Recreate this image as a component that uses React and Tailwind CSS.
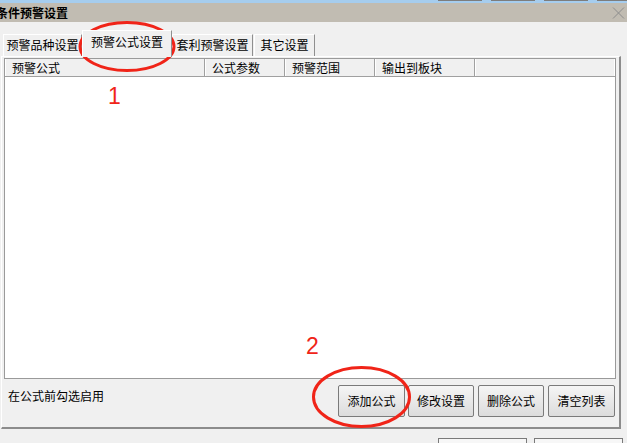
import React from 'react';

const tabs = [
  { label: '预警品种设置', w: 'w-[79px]' },
  { label: '预警公式设置', w: 'w-[90px]', active: true },
  { label: '套利预警设置', w: 'w-[81px]' },
  { label: '其它设置', w: 'w-[61px]' },
];

const columns = [
  { label: '预警公式', w: 'w-[200px]' },
  { label: '公式参数', w: 'w-[80px]' },
  { label: '预警范围', w: 'w-[90px]' },
  { label: '输出到板块', w: 'w-[100px]' },
];

const buttons = [
  { label: '添加公式', cls: 'ml-auto w-[67px]' },
  { label: '修改设置', cls: 'ml-[3px] w-[66px]' },
  { label: '删除公式', cls: 'ml-[4px] w-[66px]' },
  { label: '清空列表', cls: 'ml-[4px] w-[67px]' },
];

function Button({ label, cls }) {
  return (
    <div className={`${cls} h-[32px] flex items-center justify-center border border-[#7a7a7a] rounded-[2px] bg-linear-to-b from-[#f5f5f5] to-[#dcdcdc] text-[12px] text-black leading-none`}>
      {label}
    </div>
  );
}

export default function App() {
  return (
    <div className="relative w-[627px] h-[443px] overflow-hidden bg-[#f0f0f0] font-['Noto_Sans_CJK_SC','Liberation_Sans',sans-serif] text-black">
      {/* 窗口顶边 */}
      <div className="h-[3px] bg-[#a6cdee] flex items-start">
        <div className="ml-[438px] w-[44px] h-[1px] bg-[#7d7d7d]" />
        <div className="ml-[9px] w-[44px] h-[1px] bg-[#7d7d7d]" />
        <div className="ml-[9px] w-[44px] h-[1px] bg-[#7d7d7d]" />
        <div className="ml-[9px] w-[30px] h-[1px] bg-[#7d7d7d]" />
      </div>

      {/* 标题栏 */}
      <div className="h-[19px] bg-[#c1bcb2] flex items-center justify-between">
        <div className="ml-[-4px] text-[12px] font-bold leading-none">条件预警设置</div>
        <svg width="13" height="12" viewBox="0 0 13 12" className="mr-[2px]">
          <path d="M1 0.5 L12 11.5 M12 0.5 L1 11.5" stroke="#8c8c8c" strokeWidth="1" fill="none" />
        </svg>
      </div>

      {/* 标签页 */}
      <div className="pt-[8px] pl-[3px] h-[34px] flex items-end">
        {tabs.map((t, i) => (
          <div
            key={i}
            className={`${t.w} ${t.active ? 'h-[27px] mb-[-1px] z-10 pb-[4px] bg-[#f0f0f0]' : 'h-[22px] pb-[1px]'} ${i === 3 ? 'ml-[1px]' : ''} flex items-center justify-center border-t border-l border-white border-r border-r-[#8f8f8f] text-[12px] leading-none`}
          >
            {t.label}
          </div>
        ))}
      </div>

      {/* 面板 */}
      <div className="ml-[1px] w-[620px] h-[373px] border-t border-l border-white border-r-2 border-b-2 border-r-[#8c8c8c] border-b-[#8c8c8c] pl-[2px] pr-[2px] pt-[1px] flex flex-col">
        <div className="w-[612px] h-[321px] border border-[#9a9a9a] bg-white flex flex-col">
          <div className="h-[18px] flex bg-[#f0f0f0] border-b border-[#a0a0a0]">
            {columns.map((c, i) => (
              <div
                key={i}
                className={`${c.w} h-full flex items-center pl-[6px] border-l border-white border-r border-r-[#a0a0a0] text-[12px] leading-none`}
              >
                {c.label}
              </div>
            ))}
            <div className="flex-1 h-full border-l border-white border-r border-r-white" />
          </div>
        </div>

        <div className="flex items-start pt-[6px] pr-[2px]">
          <div className="ml-[4px] text-[12px] leading-[22px]">在公式前勾选启用</div>
          {buttons.map((b, i) => (
            <Button key={i} label={b.label} cls={b.cls} />
          ))}
        </div>
      </div>

      {/* 底部按钮 */}
      <div className="h-[14px] flex items-start pt-[9px] overflow-hidden">
        <div className="ml-[438px] w-[89px] h-[24px] border border-[#7a7a7a] bg-[#f7f7f7]" />
        <div className="ml-[7px] w-[89px] h-[24px] border border-[#7a7a7a] bg-[#f7f7f7]" />
      </div>

      {/* 红色标注 */}
      <svg className="absolute left-0 top-0 pointer-events-none" width="627" height="443">
        <ellipse cx="127" cy="46.5" rx="47" ry="24" fill="none" stroke="#f02418" strokeWidth="3" />
        <ellipse cx="361.5" cy="397" rx="48" ry="29.5" fill="none" stroke="#f02418" strokeWidth="3" />
      </svg>
      <span className="absolute left-[108px] top-[85px] text-[23px] leading-[23px] text-[#f02418] font-['Liberation_Sans',sans-serif]">1</span>
      <span className="absolute left-[306px] top-[335px] text-[23px] leading-[23px] text-[#f02418] font-['Liberation_Sans',sans-serif]">2</span>
    </div>
  );
}
